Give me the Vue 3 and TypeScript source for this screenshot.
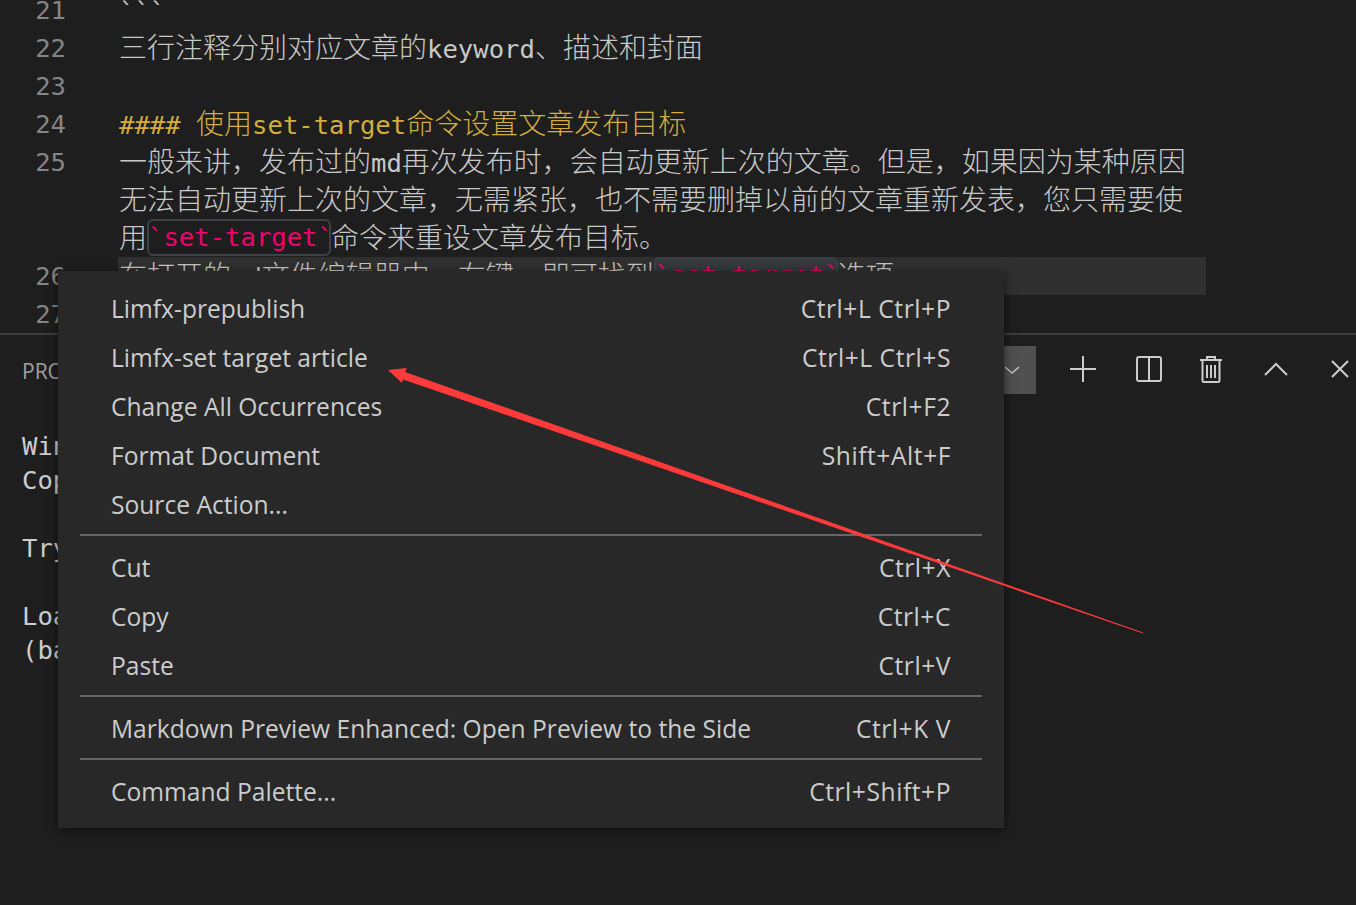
<script setup lang="ts">
interface Seg { t: string; latin: boolean }
interface Row { num?: string; text: string; kind?: 'head' | 'active' }
interface Item { label: string; keys?: string }

const split = (s: string): Seg[] =>
  (s.match(/[\x00-\x7f]+|[^\x00-\x7f]+/g) ?? []).map((t) => ({ t, latin: /^[\x00-\x7f]/.test(t) }))

const before: Row[] = [
  { num: '21', text: '```' },
  { num: '22', text: '三行注释分别对应文章的keyword、描述和封面' },
  { num: '23', text: '' },
  { num: '24', text: '#### 使用set-target命令设置文章发布目标', kind: 'head' },
  { num: '25', text: '一般来讲，发布过的md再次发布时，会自动更新上次的文章。但是，如果因为某种原因' },
  { text: '无法自动更新上次的文章，无需紧张，也不需要删掉以前的文章重新发表，您只需要使' },
]

const groups: Item[][] = [
  [
    { label: 'Limfx-prepublish', keys: 'Ctrl+L Ctrl+P' },
    { label: 'Limfx-set target article', keys: 'Ctrl+L Ctrl+S' },
    { label: 'Change All Occurrences', keys: 'Ctrl+F2' },
    { label: 'Format Document', keys: 'Shift+Alt+F' },
    { label: 'Source Action...' },
  ],
  [
    { label: 'Cut', keys: 'Ctrl+X' },
    { label: 'Copy', keys: 'Ctrl+C' },
    { label: 'Paste', keys: 'Ctrl+V' },
  ],
  [{ label: 'Markdown Preview Enhanced: Open Preview to the Side', keys: 'Ctrl+K V' }],
  [{ label: 'Command Palette...', keys: 'Ctrl+Shift+P' }],
]

const terminal = [
  'Windows PowerShell',
  'Copyright (C) Microsoft Corporation.',
  '',
  'Try the new cross-platform PowerShell',
  '',
  'Loading personal and system profiles',
  '(base) PS C:\\Users\\limfx>',
]
</script>

<template>
  <div class="page">
    <section class="editor">
      <div class="lines">
        <div v-for="(r, i) in before" :key="i" class="line" :class="r.kind">
          <span class="num">{{ r.num }}</span>
          <span class="code">
            <span v-for="(s, j) in split(r.text)" :key="j" :class="{ la: s.latin }">{{ s.t }}</span>
          </span>
        </div>
        <div class="line">
          <span class="num"></span>
          <span class="code">用<span class="tick la">`set-target`</span>命令来重设文章发布目标。</span>
        </div>
        <div class="line active">
          <span class="num">26</span>
          <span class="code">在打开的<span class="la">md</span>文件编辑器中，右键，即可找到<span class="tick la">`set-target`</span>选项</span>
        </div>
        <div class="line">
          <span class="num">27</span>
          <span class="code"></span>
        </div>
      </div>
    </section>

    <section class="panel">
      <header class="panel-head">
        <span class="tab">PROBLEMS</span>
        <div class="tools">
          <div class="select">
            <svg width="16" height="10" viewBox="0 0 16 10"><path d="M1 2l7 6 7-6" fill="none" stroke="#bbb" stroke-width="1.6" /></svg>
          </div>
          <svg class="icon i-plus" width="28" height="28" viewBox="0 0 28 28"><path d="M14 1v26M1 14h26" stroke="#ccc" stroke-width="2" fill="none" /></svg>
          <svg class="icon i-split" width="28" height="28" viewBox="0 0 28 28"><rect x="2" y="2" width="24" height="24" rx="2" fill="none" stroke="#ccc" stroke-width="2" /><path d="M14 2v24" stroke="#ccc" stroke-width="2" /></svg>
          <svg class="icon i-trash" width="24" height="28" viewBox="0 0 24 28"><path d="M1 5h22M8 5V2h8v3M3.500 5v20.500a1.500 1.500 0 0 0 1.500 1.500h14a1.500 1.500 0 0 0 1.500-1.500V5M8 10v13M12 10v13M16 10v13" fill="none" stroke="#ccc" stroke-width="2" /></svg>
          <svg class="icon i-up" width="24" height="14" viewBox="0 0 24 14"><path d="M1 13L12 2l11 11" fill="none" stroke="#ccc" stroke-width="2" /></svg>
          <svg class="icon i-x" width="20" height="20" viewBox="0 0 20 20"><path d="M2 2l16 16M18 2L2 18" fill="none" stroke="#ccc" stroke-width="2" /></svg>
        </div>
      </header>
      <div class="term">
        <div v-for="(t, i) in terminal" :key="i" class="term-line">{{ t }}</div>
      </div>
    </section>

    <nav class="menu">
      <template v-for="(g, i) in groups" :key="i">
        <div v-if="i > 0" class="sep"></div>
        <div v-for="it in g" :key="it.label" class="item">
          <span>{{ it.label }}</span>
          <span class="keys">{{ it.keys }}</span>
        </div>
      </template>
    </nav>

    <svg class="arrow" width="1356" height="905" viewBox="0 0 1356 905">
      <polygon points="388,370 407,368 405,372 1143,632.500 1143,633.500 403,379.500 402,383" fill="#ff3a3a" />
    </svg>
  </div>
</template>

<style>
html, body { margin: 0; background: #1e1e1e; }
</style>

<style scoped>
.page {
  position: relative;
  width: 1356px;
  height: 905px;
  overflow: hidden;
  background: #1e1e1e;
  color: #ccc;
}
.editor {
  height: 333px;
  overflow: hidden;
  border-bottom: 2px solid #3c3c3c;
  box-sizing: content-box;
}
.lines { margin-top: -9px; }
.line {
  display: flex;
  height: 38px;
  line-height: 34px;
  font-family: "Noto Sans CJK SC", sans-serif;
  font-size: 28px;
  font-weight: 300;
  white-space: nowrap;
}
.num {
  width: 66px;
  flex: none;
  text-align: right;
  color: #858585;
  font-family: "DejaVu Sans Mono", monospace;
  font-size: 25.6px;
  font-weight: 400;
  line-height: 38px;
}
.code {
  margin-left: 52px;
  padding-left: 1px;
  margin-right: 150px;
  flex: 1;
  display: block;
  color: #c8c8c8;
}
.la {
  font-family: "DejaVu Sans Mono", monospace;
  font-size: 25.6px;
  font-weight: 400;
}
.head .code { color: #d4ad3c; }
.active .code { background: #303030; }
.tick {
  display: inline-block;
  height: 37px;
  line-height: 33px;
  vertical-align: top;
  color: #f4006e;
  box-sizing: border-box;
  border: 2px solid #3d4246;
  border-radius: 6px;
  padding: 0;
  width: 184px;
  text-indent: -1px;
}
.active .tick { background: #363a3d; }
.panel { height: 570px; }
.panel-head {
  height: 70px;
  display: flex;
  align-items: center;
  justify-content: space-between;
  padding: 0 6px 0 22px;
  box-sizing: border-box;
}
.tab {
  font: 21px "Open Sans", sans-serif;
  color: #a0a0a0;
  margin-top: 2px;
}
.tools { display: flex; align-items: center; }
.icon { margin-bottom: 3px; }
.select {
  width: 60px;
  height: 48px;
  background: #505050;
  margin-right: 33px;
  display: flex;
  align-items: center;
  padding-left: 28px;
  box-sizing: border-box;
}
.i-plus { margin-right: 38px; }
.i-split { margin-right: 36px; }
.i-trash { margin-right: 41px; }
.i-up { margin-right: 42px; }
.term {
  padding: 24px 0 0 22px;
  font-family: "DejaVu Sans Mono", monospace;
  font-size: 25.6px;
  line-height: 34px;
  color: #ccc;
}
.term-line { height: 34px; white-space: pre; }
.menu {
  position: absolute;
  left: 58px;
  top: 271px;
  width: 946px;
  height: 557px;
  box-sizing: border-box;
  padding: 13px 0;
  background: #282828;
  box-shadow: 0 2px 10px rgba(0, 0, 0, 0.55);
  font-family: "Open Sans", sans-serif;
  font-size: 24.6px;
  color: #ccc;
}
.item {
  height: 49px;
  padding: 0 53px;
  display: flex;
  align-items: center;
  justify-content: space-between;
  white-space: nowrap;
}
.keys { letter-spacing: 0.55px; }
.sep {
  height: 2px;
  margin: 5px 22px 7px;
  background: #666;
}
.arrow {
  position: absolute;
  left: 0;
  top: 0;
  pointer-events: none;
}
</style>
